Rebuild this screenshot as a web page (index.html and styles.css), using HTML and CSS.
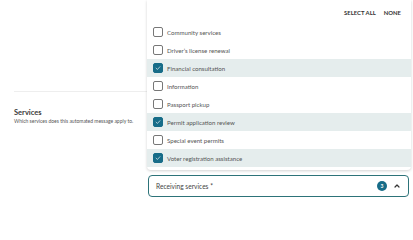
FILE: index.html
```html
<!DOCTYPE html>
<html lang="en">
<head>
<meta charset="utf-8">
<title>Services</title>
<link rel="stylesheet" href="styles.css">
</head>
<body>
<div class="page">
  <div class="left">
    <div class="prev-section"></div>
    <div class="section">
      <div class="section-title">Services</div>
      <div class="section-desc">Which services does this automated message apply to.</div>
    </div>
  </div>
  <div class="right">
    <div class="panel">
      <div class="panel-head">
        <span class="head-btn">SELECT ALL</span>
        <span class="head-btn">NONE</span>
      </div>
      <ul class="options">
        <li class="option"><span class="box"></span><span class="label">Community services</span></li>
        <li class="option"><span class="box"></span><span class="label">Driver’s license renewal</span></li>
        <li class="option selected"><span class="box"><svg viewBox="0 0 10 10" class="tick"><path d="M2.6 5.2 L4.3 6.8 L7.4 3.4" /></svg></span><span class="label">Financial consultation</span></li>
        <li class="option"><span class="box"></span><span class="label">Information</span></li>
        <li class="option"><span class="box"></span><span class="label">Passport pickup</span></li>
        <li class="option selected"><span class="box"><svg viewBox="0 0 10 10" class="tick"><path d="M2.6 5.2 L4.3 6.8 L7.4 3.4" /></svg></span><span class="label">Permit application review</span></li>
        <li class="option"><span class="box"></span><span class="label">Special event permits</span></li>
        <li class="option selected"><span class="box"><svg viewBox="0 0 10 10" class="tick"><path d="M2.6 5.2 L4.3 6.8 L7.4 3.4" /></svg></span><span class="label">Voter registration assistance</span></li>
      </ul>
    </div>
    <div class="field">
      <span class="field-label">Receiving services *</span>
      <span class="count">3</span>
      <svg class="chevron" viewBox="0 0 10 10"><path d="M3 6 L5 4 L7 6" /></svg>
    </div>
  </div>
</div>
</body>
</html>
```

FILE: styles.css
```css
* { box-sizing: border-box; }
html, body {
  margin: 0;
  padding: 0;
  background: #ffffff;
  font-family: Lato, "Noto Sans", sans-serif;
  color: #333333;
}
.page {
  display: flex;
  width: 413px;
  height: 200px;
  overflow: hidden;
}
.left {
  width: 147px;
  flex: none;
  padding-left: 14px;
}
.prev-section {
  height: 92px;
  border-bottom: 1px solid #eeeeee;
}
.section {
  padding-top: 16px;
}
.section-title {
  font-size: 7.5px;
  font-weight: 700;
  color: #3a3a3a;
  line-height: 10px;
}
.section-desc {
  font-size: 5px;
  color: #555;
  line-height: 7px;
}
.right {
  width: 264px;
  flex: none;
  display: flex;
  flex-direction: column;
}
.panel {
  height: 170px;
  background: #fff;
  border-radius: 0 0 4px 4px;
  box-shadow: 0 1px 3px rgba(0,0,0,0.18);
}
.panel-head {
  height: 23px;
  display: flex;
  justify-content: flex-end;
  align-items: center;
  gap: 8px;
  padding-right: 10px;
  padding-top: 1px;
}
.head-btn {
  font-size: 5.9px;
  font-weight: 700;
  color: #333;
}
.options {
  list-style: none;
  margin: 0;
  padding: 0;
}
.option {
  height: 18px;
  display: flex;
  align-items: center;
  padding-left: 6px;
  gap: 4px;
}
.option.selected {
  background: #e5eded;
}
.box {
  width: 10px;
  height: 10px;
  border: 1px solid #777;
  border-radius: 2px;
  background: #fff;
  display: flex;
  align-items: center;
  justify-content: center;
}
.selected .box {
  background: #176c88;
  border-color: #176c88;
}
.tick {
  width: 10px;
  height: 10px;
}
.tick path {
  fill: none;
  stroke: #ffffff;
  stroke-width: 0.8;
  stroke-linecap: round;
  stroke-linejoin: round;
}
.label {
  font-size: 6.1px;
  color: #555;
}
.field {
  margin-top: 5px;
  margin-left: 1px;
  margin-right: 2px;
  height: 22px;
  border: 1.5px solid #2d7379;
  border-radius: 4px;
  display: flex;
  align-items: center;
  padding-left: 7px;
  padding-right: 6px;
}
.field-label {
  font-size: 6.6px;
  color: #444;
  flex: 1;
}
.count {
  width: 10px;
  height: 10px;
  border-radius: 50%;
  background: #176c88;
  color: #fff;
  font-size: 5px;
  font-weight: 700;
  display: flex;
  align-items: center;
  justify-content: center;
}
.chevron {
  width: 10px;
  height: 10px;
  margin-left: 5px;
}
.chevron path {
  fill: none;
  stroke: #333;
  stroke-width: 1.2;
  stroke-linecap: round;
  stroke-linejoin: round;
}
```
